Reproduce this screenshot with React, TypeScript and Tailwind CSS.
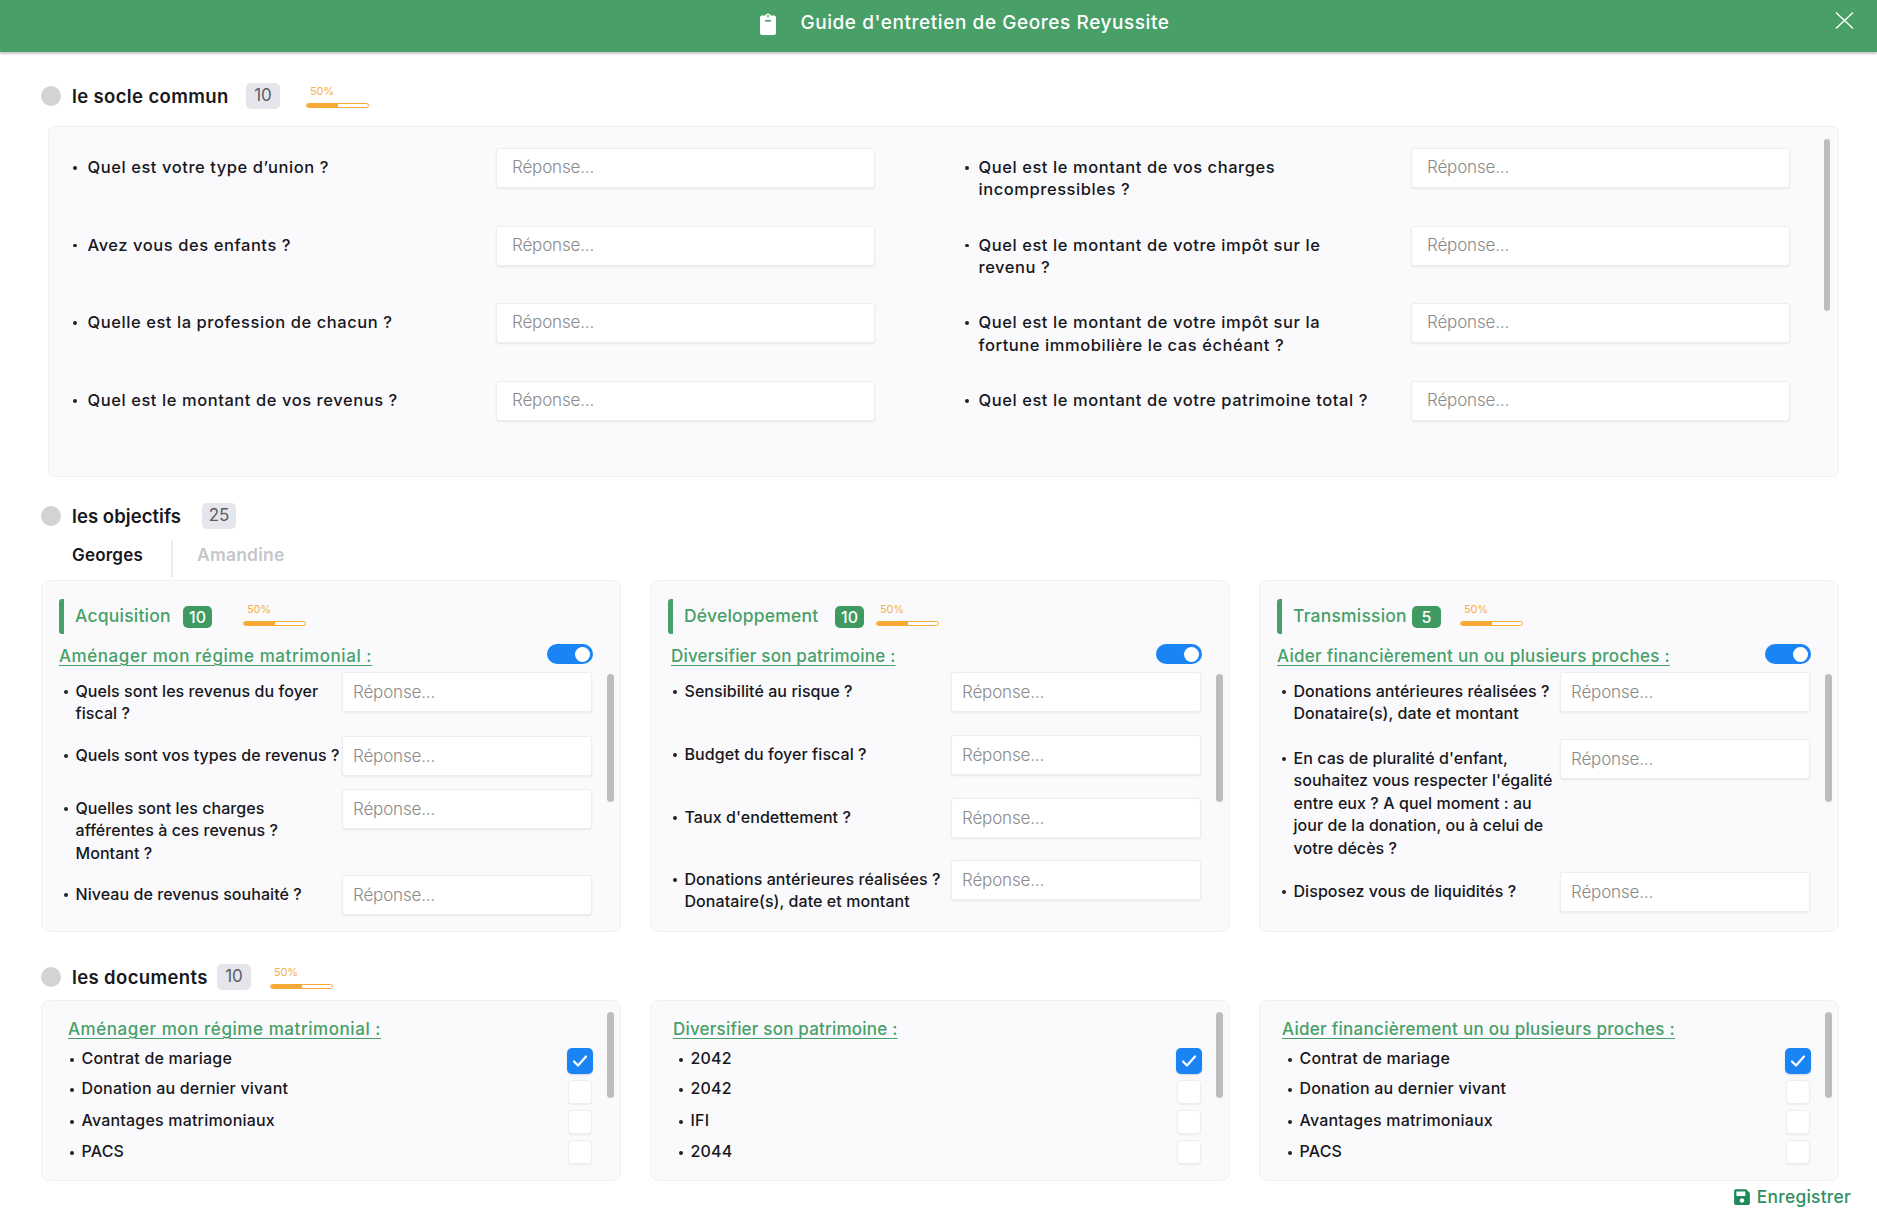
import React from "react";
import { FaSave } from "react-icons/fa";

const FONT = "font-['Inter','Noto_Sans',sans-serif]";

function Bullet({ className = "" }: { className?: string }) {
  return <span className={`block h-[3.5px] w-[3.5px] shrink-0 rounded-full bg-[#222] ${className}`} />;
}

function Answer({ className = "", padding = "pl-[15px] pb-[2px]" }: { className?: string; padding?: string }) {
  return (
    <input
      readOnly
      placeholder="Réponse..."
      className={`h-[40px] shrink-0 rounded-[3px] border border-[#eeeef1] bg-white ${padding} text-[17px] font-light tracking-[-0.01em] text-[#555] shadow-[0_1px_2px_rgba(0,0,0,0.08)] outline-none placeholder:text-[#8b8b8b] ${className}`}
    />
  );
}

function Progress({ className = "" }: { className?: string }) {
  return (
    <div className={`flex w-[63px] shrink-0 flex-col ${className}`}>
      <span className="pl-[4px] text-[11px] leading-[13px] tracking-[-0.02em] text-[#f5b04a]">50%</span>
      <div className="mt-[5px] h-[5px] w-full overflow-hidden rounded-full border border-[#f7a935] bg-white">
        <div className="h-full w-1/2 bg-[#f7a935]" />
      </div>
    </div>
  );
}

function Scroll({ className }: { className: string }) {
  return <div className={`absolute w-[7px] rounded-full bg-[#bdbdbf] ${className}`} />;
}

function SectionHead({
  title,
  titleW,
  count,
  progress,
  track = "tracking-[0.02em]",
  className,
}: {
  title: string;
  titleW: string;
  count: string;
  progress?: string;
  track?: string;
  className: string;
}) {
  return (
    <div className={`flex h-[26px] items-center pl-[41px] ${className}`}>
      <span className="mr-[11px] h-[20px] w-[20px] shrink-0 rounded-full bg-[#d3d3d6]" />
      <span className={`${titleW} whitespace-nowrap pt-[1px] text-[18.5px] font-semibold ${track} text-[#17171c]`}>{title}</span>
      <span className="flex h-[26px] w-[34px] items-center justify-center rounded-[5px] bg-[#e4e6ec] text-[17px] text-[#5a5d66]">{count}</span>
      {progress && <Progress className={progress} />}
    </div>
  );
}

function Toggle() {
  return (
    <div className="flex h-[20px] w-[46px] shrink-0 items-center justify-end rounded-full bg-[#1a84f5] pr-[3px]">
      <span className="h-[15px] w-[15px] rounded-full bg-white" />
    </div>
  );
}

type QRow = { q: string; h: string };

function Objective({
  title,
  count,
  titleW,
  progressMl,
  sub,
  subCls,
  rows,
}: {
  title: string;
  count: string;
  titleW: string;
  progressMl: string;
  sub: string;
  subCls: string;
  rows: QRow[];
}) {
  return (
    <div className="relative h-[352px] w-[580px] overflow-hidden rounded-[8px] border border-[#f1f1f4] bg-[#fafafc] pt-[18px]">
      <div className="flex h-[35px] items-center pl-[17px]">
        <span className="h-[35px] w-[5px] shrink-0 rounded-l-[3px] bg-[#46a067]" />
        <span className={`${titleW} whitespace-nowrap pb-[1px] pl-[11px] text-[17.5px] font-medium tracking-[0.012em] text-[#46a067]`}>{title}</span>
        <span className="flex h-[22px] w-[29px] shrink-0 items-center justify-center rounded-[5px] bg-[#3f9a61] text-[16px] font-medium text-white">{count}</span>
        <Progress className={`${progressMl} mb-[5px]`} />
      </div>
      <div className="mt-[10px] flex h-[20px] items-start justify-between pr-[27px]">
        <span className={`${subCls} whitespace-nowrap text-[17px] font-medium leading-[24px] text-[#46a067] underline decoration-1 underline-offset-[3px]`}>{sub}</span>
        <Toggle />
      </div>
      <div className="mt-[8px] pr-[28px]">
        {rows.map((r) => (
          <div key={r.q} className={`flex ${r.h} items-start`}>
            <Bullet className="ml-[22px] mt-[18px]" />
            <p className="ml-[8px] w-[268px] whitespace-pre pt-[8px] text-[16px] font-medium leading-[22.4px] tracking-[0.004em] text-[#17171c]">{r.q}</p>
            <Answer className="ml-auto w-[250px]" padding="pl-[10px]" />
          </div>
        ))}
      </div>
      <Scroll className="right-[6px] top-[93px] h-[128px]" />
    </div>
  );
}

function Box({ checked }: { checked?: boolean }) {
  if (checked) {
    return (
      <span className="flex h-[26px] w-[26px] items-center justify-center rounded-[5px] bg-[#1a84f5] shadow-[0_1px_2px_rgba(0,0,0,0.15)]">
        <svg width="16" height="14" viewBox="0 0 16 14" fill="none" stroke="#fff" strokeWidth="2.2" strokeLinecap="round" strokeLinejoin="round">
          <path d="M2 7.5 6 11.5 14 2.5" />
        </svg>
      </span>
    );
  }
  return <span className="mr-[1px] block h-[24px] w-[24px] rounded-[4px] border border-[#eeeef1] bg-white shadow-[0_1px_2px_rgba(0,0,0,0.06)]" />;
}

function Docs({ sub, subCls, items }: { sub: string; subCls: string; items: string[] }) {
  const layout = [
    { h: "h-[32px]", mt: "mt-[10px]", tx: "-mt-[1px]" },
    { h: "h-[30px]", mt: "mt-[8px]", tx: "-mt-[3px]" },
    { h: "h-[30px]", mt: "mt-[10px]", tx: "-mt-[1px]" },
    { h: "h-[24px]", mt: "mt-[11px]", tx: "" },
  ];
  return (
    <div className="relative h-[181px] w-[580px] overflow-hidden rounded-[8px] border border-[#f1f1f4] bg-[#fafafc] pt-[16px]">
      <p className={`${subCls} whitespace-nowrap text-[17px] font-medium leading-[24px] text-[#46a067] underline decoration-1 underline-offset-[3px]`}>{sub}</p>
      <div className="mt-[7px] pr-[27px]">
        {items.map((t, i) => (
          <div key={t + i} className={`flex ${layout[i].h} items-start`}>
            <Bullet className={`ml-[28px] shrink-0 ${layout[i].mt}`} />
            <span className={`ml-[8px] text-[16px] font-medium leading-[22px] tracking-[0.012em] text-[#17171c] ${layout[i].tx}`}>{t}</span>
            <span className="ml-auto block">
              <Box checked={i === 0} />
            </span>
          </div>
        ))}
      </div>
      <Scroll className="right-[6px] top-[11px] h-[86px]" />
    </div>
  );
}

const common: [string, string][] = [
  ["Quel est votre type d’union ?", "Quel est le montant de vos charges\nincompressibles ?"],
  ["Avez vous des enfants ?", "Quel est le montant de votre impôt sur le\nrevenu ?"],
  ["Quelle est la profession de chacun ?", "Quel est le montant de votre impôt sur la\nfortune immobilière le cas échéant ?"],
  ["Quel est le montant de vos revenus ?", "Quel est le montant de votre patrimoine total ?"],
];

const qText = "whitespace-pre pt-[8px] text-[16.5px] font-medium leading-[22.4px] tracking-[0.034em] text-[#17171c]";

export default function App() {
  return (
    <div className={`${FONT} h-[1219px] w-full overflow-hidden bg-white`}>
      <header className="relative flex h-[52px] items-center justify-center bg-[#48a068] pb-[5px] pl-[52px] shadow-[0_2px_2px_rgba(0,0,0,0.22)]">
        <svg width="18" height="22" viewBox="0 0 18 22" className="mr-[23px]" fill="#fff">
          <path d="M6.5 2.4A2.6 2.6 0 0 1 9 .5a2.6 2.6 0 0 1 2.5 1.9H15a2 2 0 0 1 2 2V20a2 2 0 0 1-2 2H3a2 2 0 0 1-2-2V4.4a2 2 0 0 1 2-2h3.5Z" />
          <rect x="6" y="7" width="6" height="1.6" fill="#48a068" />
          <circle cx="9" cy="3" r="1" fill="#48a068" />
        </svg>
        <h1 className="text-[19px] font-medium tracking-[0.03em] text-white">Guide d'entretien de Geores Reyussite</h1>
        <svg width="19" height="17" viewBox="0 0 19 17" className="absolute right-[23px] top-[12px]" stroke="#fff" strokeWidth="1.4" fill="none">
          <path d="M1 .5 18 16.5M18 .5 1 16.5" />
        </svg>
      </header>

      <SectionHead title="le socle commun" titleW="w-[174px]" count="10" progress="ml-[26px]" className="mt-[31px]" />
      <section className="relative ml-[48px] mt-[17px] h-[351px] w-[1791px] rounded-[6px] border border-[#f0f0f3] bg-[#fafafc] pt-[21px]">
        {common.map(([a, b]) => (
          <div key={a} className="flex h-[77.7px] items-start">
            <Bullet className="ml-[24px] mt-[18px]" />
            <p className={`ml-[11px] w-[408.5px] ${qText}`}>{a}</p>
            <Answer className="w-[379px]" />
            <Bullet className="ml-[90px] mt-[18px]" />
            <p className={`ml-[10px] w-[432.5px] ${qText}`}>{b}</p>
            <Answer className="w-[379px]" />
          </div>
        ))}
        <Scroll className="right-[8px] top-[12px] h-[172px] !w-[6px]" />
      </section>

      <SectionHead title="les objectifs" titleW="w-[130px]" track="tracking-[0.003em]" count="25" className="mt-[26px]" />
      <div className="ml-[41px] mt-[11px] flex h-[37px] items-start text-[17px] font-semibold tracking-[0.012em]">
        <span className="h-[37px] w-[132px] border-r-2 border-[#ececef] pl-[31px] leading-[30px] text-[#17171c]">Georges</span>
        <span className="pl-[24px] text-[17.5px] leading-[30px] text-[#c5c6cb]">Amandine</span>
      </div>
      <div className="ml-[41px] mt-[3px] flex gap-[29px]">
        <Objective
          title="Acquisition"
          count="10"
          titleW="w-[119px]"
          progressMl="ml-[31px]"
          sub="Aménager mon régime matrimonial :"
          subCls="pl-[17px] tracking-[0.033em]"
          rows={[
            { q: "Quels sont les revenus du foyer\nfiscal ?", h: "h-[64px]" },
            { q: "Quels sont vos types de revenus ?", h: "h-[53px]" },
            { q: "Quelles sont les charges\nafférentes à ces revenus ?\nMontant ?", h: "h-[86px]" },
            { q: "Niveau de revenus souhaité ?", h: "h-[50px]" },
          ]}
        />
        <Objective
          title="Développement"
          count="10"
          titleW="w-[162px]"
          progressMl="ml-[12px]"
          sub="Diversifier son patrimoine :"
          subCls="pl-[20px] tracking-[0.012em]"
          rows={[
            { q: "Sensibilité au risque ?", h: "h-[63px]" },
            { q: "Budget du foyer fiscal ?", h: "h-[63px]" },
            { q: "Taux d'endettement ?", h: "h-[62px]" },
            { q: "Donations antérieures réalisées ?\nDonataire(s), date et montant", h: "h-[60px]" },
          ]}
        />
        <Objective
          title="Transmission"
          count="5"
          titleW="w-[130px]"
          progressMl="ml-[19px]"
          sub="Aider financièrement un ou plusieurs proches :"
          subCls="pl-[17px] tracking-[0.017em]"
          rows={[
            { q: "Donations antérieures réalisées ?\nDonataire(s), date et montant", h: "h-[67px]" },
            { q: "En cas de pluralité d'enfant,\nsouhaitez vous respecter l'égalité\nentre eux ? A quel moment : au\njour de la donation, ou à celui de\nvotre décès ?", h: "h-[133px]" },
            { q: "Disposez vous de liquidités ?", h: "h-[50px]" },
          ]}
        />
      </div>

      <SectionHead title="les documents" titleW="w-[145px]" count="10" progress="ml-[19px]" className="mt-[32px]" />
      <div className="ml-[41px] mt-[10px] flex gap-[29px]">
        <Docs sub="Aménager mon régime matrimonial :" subCls="pl-[26px] tracking-[0.033em]" items={["Contrat de mariage", "Donation au dernier vivant", "Avantages matrimoniaux", "PACS"]} />
        <Docs sub="Diversifier son patrimoine :" subCls="pl-[22px] tracking-[0.012em]" items={["2042", "2042", "IFI", "2044"]} />
        <Docs sub="Aider financièrement un ou plusieurs proches :" subCls="pl-[22px] tracking-[0.017em]" items={["Contrat de mariage", "Donation au dernier vivant", "Avantages matrimoniaux", "PACS"]} />
      </div>
      <div className="mt-[3px] flex items-center justify-end pr-[26px] text-[17.4px] font-medium tracking-[0.015em] text-[#2f8f62]">
        <FaSave className="mr-[6px] text-[18px] text-[#1e8a5c]" />
        <span>Enregistrer</span>
      </div>
    </div>
  );
}
